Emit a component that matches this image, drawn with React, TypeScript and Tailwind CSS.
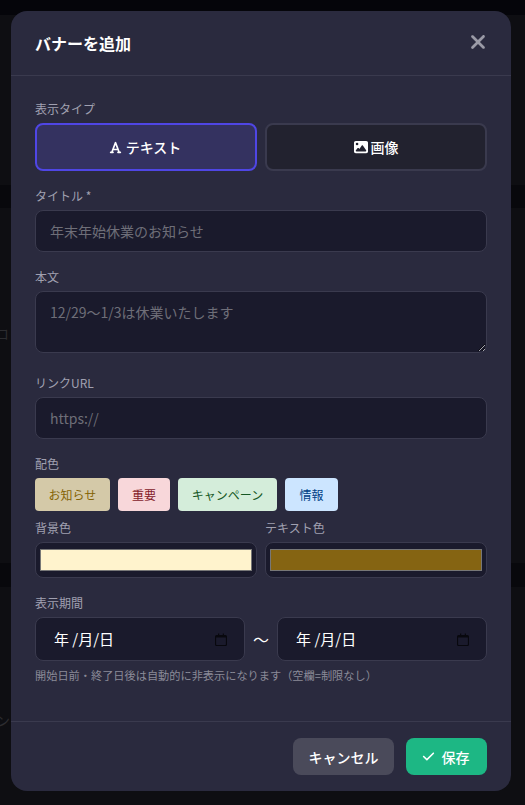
import React from 'react';
import { FaXmark, FaFont, FaImage, FaCheck } from 'react-icons/fa6';

const presets = [
  { label: 'お知らせ', className: 'w-[75px] bg-[#d4c9a8] text-[#856404]' },
  { label: '重要', className: 'w-[52px] bg-[#f8d7da] text-[#842029]' },
  { label: 'キャンペーン', className: 'w-[99px] bg-[#d4edda] text-[#155724]' },
  { label: '情報', className: 'w-[53px] bg-[#cce5ff] text-[#004085]' },
];

const backdrop = [
  'h-[15px] bg-[#05050a]',
  'h-[170px] bg-[#0e0e12]',
  'h-[23px] bg-[#08080c]',
  'h-[355px] bg-[#0e0e12]',
  'h-[24px] bg-[#08080c]',
  'h-[218px] bg-[#0e0e12]',
];

const labelClass = 'block text-xs leading-[17px] mb-1.5 text-[#a0a0b0]';
const inputClass =
  'w-full h-[42px] px-3.5 bg-[#1a1a2c] border border-[#3a3a4e] rounded-lg text-sm text-white placeholder:text-[#6e6e78] outline-none';

function DateField() {
  return (
    <div className="flex-1 h-11 flex items-center justify-between pl-[18px] pr-[17px] bg-[#1a1a2c] border border-[#3a3a4e] rounded-lg text-[15px] text-white">
      <span>年 /月/日</span>
      <svg width="12" height="13" viewBox="0 0 12 13" fill="none" className="text-[#08080e]">
        <path
          d="M3 0.5h1.2v1.5h3.600V0.5H9v1.500h1.500A1.500 1.500 0 0 1 12 3.500v8A1.500 1.500 0 0 1 10.500 13h-9A1.500 1.500 0 0 1 0 11.500v-8A1.500 1.500 0 0 1 1.500 2H3zM1.100 4.500v6.800a0.600 0.600 0 0 0 0.600 0.600h8.600a0.600 0.600 0 0 0 0.600-0.600V4.500z"
          fill="currentColor"
        />
      </svg>
    </div>
  );
}

export default function App() {
  return (
    <div
      className="relative w-[525px] h-[805px] overflow-hidden"
      style={{ fontFamily: '"Noto Sans CJK JP", sans-serif' }}
    >
      {backdrop.map((row) => (
        <div key={row} className={row} />
      ))}
      <span className="absolute left-[-5px] top-[323px] text-sm text-[#2c2c30]">ロ</span>
      <span className="absolute left-[-4px] top-[710px] text-sm text-[#2c2c30]">ン</span>

      <div className="absolute left-[11px] top-[11px] w-[500px] h-[780px] flex flex-col bg-[#2a2a3e] rounded-2xl">
        <div className="h-[65px] flex items-start justify-between pl-6 pr-[22px] pt-5 border-b border-[#3a3a4e]">
          <h2 className="text-base leading-6 font-bold text-white">バナーを追加</h2>
          <button className="text-[#9a9aa6]">
            <FaXmark size={22} />
          </button>
        </div>

        <div className="flex-1 px-6 pt-6">
          <div className="mb-4">
            <label className={labelClass}>表示タイプ</label>
            <div className="grid grid-cols-2 gap-2">
              <button className="h-12 flex items-center justify-center gap-1 rounded-lg border-2 border-[#4f46e5] bg-[#343260] pr-0.5 text-sm font-medium text-white">
                <FaFont size={13} />
                テキスト
              </button>
              <button className="h-12 flex items-center justify-center gap-[3px] rounded-lg border-2 border-[#3a3a4e] bg-[#22222f] text-sm font-medium text-white">
                <FaImage size={14} />
                画像
              </button>
            </div>
          </div>

          <div className="mb-4">
            <label className={labelClass}>タイトル *</label>
            <input className={inputClass} placeholder="年末年始休業のお知らせ" />
          </div>

          <div className="mb-4">
            <label className={labelClass}>本文</label>
            <textarea
              className="w-full h-[62px] px-3.5 py-2.5 bg-[#1a1a2c] border border-[#3a3a4e] rounded-lg text-sm text-white placeholder:text-[#6e6e78] outline-none"
              placeholder="12/29〜1/3は休業いたします"
            />
          </div>

          <div className="mb-4">
            <label className={labelClass}>リンクURL</label>
            <input className={inputClass} placeholder="https://" />
          </div>

          <div className="mb-4">
            <label className={labelClass}>配色</label>
            <div className="flex gap-2 mb-2">
              {presets.map((p) => (
                <button key={p.label} className={`h-[33px] rounded text-xs ${p.className}`}>
                  {p.label}
                </button>
              ))}
            </div>
            <div className="flex gap-2">
              <div className="flex-1">
                <label className={labelClass}>背景色</label>
                <input
                  type="color"
                  defaultValue="#fff3cd"
                  className="block w-full h-9 p-0.5 bg-[#1a1a2c] border border-[#3a3a4e] rounded-lg"
                />
              </div>
              <div className="flex-1">
                <label className={labelClass}>テキスト色</label>
                <input
                  type="color"
                  defaultValue="#856412"
                  className="block w-full h-9 p-0.5 bg-[#1a1a2c] border border-[#3a3a4e] rounded-lg"
                />
              </div>
            </div>
          </div>

          <div>
            <label className={labelClass}>表示期間</label>
            <div className="flex items-center gap-2">
              <DateField />
              <span className="text-base text-white">〜</span>
              <DateField />
            </div>
            <p className="mt-1.5 text-[11.2px] leading-4 text-[#8a8a98]">
              開始日前・終了日後は自動的に非表示になります（空欄=制限なし）
            </p>
          </div>
        </div>

        <div className="h-[70px] flex items-start justify-end gap-3 px-6 pt-4 border-t border-[#3a3a4e]">
          <button className="h-[37px] w-[101px] rounded-lg bg-[#4a4a5a] text-sm font-medium text-white">
            キャンセル
          </button>
          <button className="h-[37px] w-[81px] flex items-center justify-center gap-[7px] rounded-lg bg-[#1db784] pr-0.5 text-sm font-medium text-white">
            <FaCheck size={13} />
            保存
          </button>
        </div>
      </div>
    </div>
  );
}
